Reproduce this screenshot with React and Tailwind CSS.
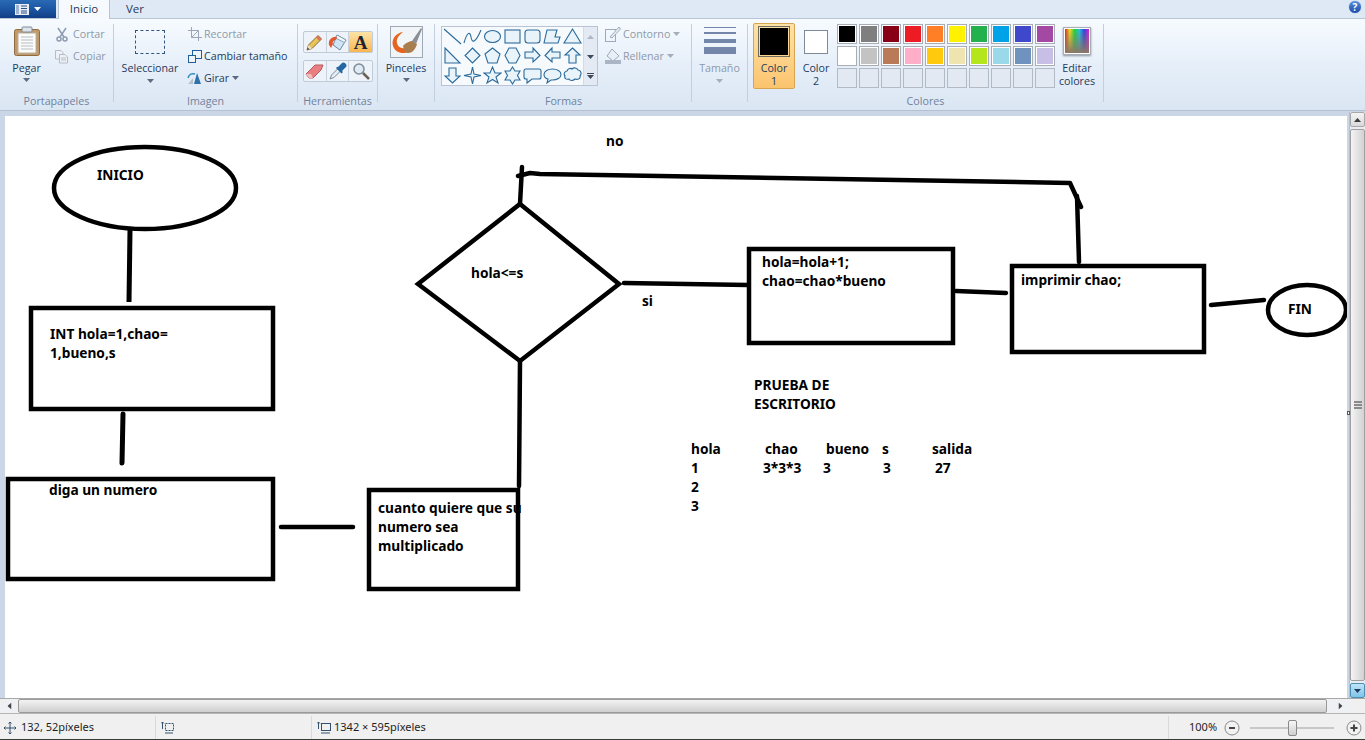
import React from "react";

const sans = "font-['Open_Sans','Noto_Sans',sans-serif]";

function Caret({ className = "", color = "#5d6b80" }) {
  return (
    <svg width="7" height="4" viewBox="0 0 7 4" className={className}>
      <path d="M0 0H7L3.5 4Z" fill={color} />
    </svg>
  );
}

function Divider() {
  return <div className="w-px h-[78px] mt-[5px] bg-[#c3cfdf] shrink-0" />;
}

function GroupLabel({ children }) {
  return <div className="text-center text-[10.7px] leading-[14px] text-[#72829a]">{children}</div>;
}

function Group({ className, label, children }) {
  return (
    <div className={`flex flex-col shrink-0 h-[91px] -mt-px ${className}`}>
      <div className="h-[76px] flex">{children}</div>
      <GroupLabel>{label}</GroupLabel>
    </div>
  );
}

function SmallAction({ icon, label, disabled, caret, className = "" }) {
  return (
    <div className={`flex items-center h-[22px] text-[10.7px] ${disabled ? "text-[#8f99a8]" : "text-[#1f3a5c]"} ${className}`}>
      <span className="w-[17px] h-[17px] flex items-center justify-center mr-[1px] shrink-0">{icon}</span>
      <span className="whitespace-nowrap">{label}</span>
      {caret && <Caret className="ml-[3px]" color={disabled ? "#a5aeba" : "#5d6b80"} />}
    </div>
  );
}

function BigLabel({ children }) {
  return <div className="text-[10.7px] leading-[13px] text-[#1f3a5c] text-center whitespace-nowrap">{children}</div>;
}

const S = "#2a6a9b";
const F = "#e8f3fa";
const shapes = [
  <path d="M1 2L18 17" fill="none" />,
  <path d="M1 16C4 5 7 4 8 10S12 17 18 3" fill="none" />,
  <ellipse cx="9.5" cy="9.5" rx="8" ry="6" />,
  <rect x="2" y="3" width="15" height="13" />,
  <rect x="2" y="3" width="15" height="13" rx="3" />,
  <path d="M1 16L4 3H14L12 10H17L15 16Z" />,
  <path d="M9.5 2L18 16H1Z" />,
  <path d="M2 2L17 17H2Z" />,
  <path d="M9.5 2L17 9.5L9.5 17L2 9.5Z" />,
  <path d="M9.5 2L17 8L14 17H5L2 8Z" />,
  <path d="M6 2H13L17 9.5L13 17H6L2 9.5Z" />,
  <path d="M2 6H10V2L17 9.5L10 16V12H2Z" />,
  <path d="M17 6H9V2L2 9.5L9 16V12H17Z" />,
  <path d="M9.5 2L17 9H13V17H6V9H2Z" />,
  <path d="M6 2H13V10H17L9.5 17L2 10H6Z" />,
  <path d="M9.5 1L11 8L18 9.5L11 11L9.5 18L8 11L1 9.5L8 8Z" />,
  <path d="M9.5 1L12 7H18L13 11L15 17L9.5 13.5L4 17L6 11L1 7H7Z" />,
  <path d="M9.5 1L12 5H17L14.5 9.5L17 14H12L9.5 18L7 14H2L4.5 9.5L2 5H7Z" />,
  <path d="M3 3H16Q18 3 18 5V11Q18 13 16 13H9L4 17V13H3Q1 13 1 11V5Q1 3 3 3Z" />,
  <path d="M9.5 3C14 3 18 5 18 8.500C18 12 14 14 9.500 14H8L4 17L5 13C2.500 12.500 1 11 1 8.500C1 5 5 3 9.500 3Z" />,
  <path d="M4 5C5 2 8 2 9 3C11 1 14 2 15 4C18 4 19 8 17 10C18 13 14 14 12 13C10 15 7 15 6 13C3 14 1 12 2 10C0 8 2 5 4 5Z" />,
];

const row1 = ["#000000", "#7f7f7f", "#880015", "#ed1c24", "#ff7f27", "#fff200", "#22b14c", "#00a2e8", "#3f48cc", "#a349a4"];
const row2 = ["#ffffff", "#c3c3c3", "#b97a57", "#ffaec9", "#ffc90e", "#efe4b0", "#b5e61d", "#99d9ea", "#7092be", "#c8bfe7"];

function Swatch({ c, empty }) {
  return (
    <div className={`w-5 h-5 border ${empty ? "border-[#b2bac6] bg-[#e2e9f3]" : "border-[#a9adb4] p-px bg-white"}`}>
      {!empty && <div className="w-full h-full" style={{ background: c }} />}
    </div>
  );
}

function ToolCell({ children, active }) {
  return (
    <div className={`w-[23px] h-full flex items-center justify-center border-r last:border-r-0 border-[#c8d2df] ${active ? "bg-gradient-to-b from-[#fde3a6] to-[#f8b64e]" : ""}`}>
      {children}
    </div>
  );
}

function Ribbon() {
  return (
    <div className="h-[91px] flex bg-gradient-to-b from-[#f7fbff] via-[#e6eff9] to-[#dbe6f4]">
      {/* Portapapeles */}
      <Group className="w-[113px]" label="Portapapeles">
        <div className="w-[53px] flex flex-col items-center pt-[8px]">
          <svg width="26" height="31" viewBox="0 0 26 31">
            <rect x="0.500" y="3.500" width="25" height="26" rx="2" fill="#c19a6b" stroke="#8f6b40" />
            <rect x="4" y="7" width="18" height="20" fill="#fbfbf8" stroke="#b9b2a3" />
            <path d="M7 11H19M7 14H19M7 17H19M7 20H19M7 23H19" stroke="#b4bdc8" />
            <rect x="8" y="1" width="10" height="5" rx="1" fill="#dfe4ea" stroke="#7f8a98" />
          </svg>
          <div className="mt-[5px]"><BigLabel>Pegar</BigLabel></div>
          <Caret className="mt-[3px]" />
        </div>
        <div className="flex flex-col pt-[5px]">
          <SmallAction
            disabled
            label={<span className="ml-[2px]">Cortar</span>}
            icon={
              <svg width="12" height="15" viewBox="0 0 12 15" fill="none" stroke="#8d9cae" strokeWidth="1.500">
                <path d="M2 1L8 10M10 1L4 10" />
                <circle cx="3" cy="12" r="2" />
                <circle cx="9" cy="12" r="2" />
              </svg>
            }
          />
          <SmallAction
            disabled
            label={<span className="ml-[2px]">Copiar</span>}
            icon={
              <svg width="15" height="15" viewBox="0 0 15 15" fill="#eef2f6" stroke="#b4bcc7">
                <path d="M1.500 1.500H7L9 3.500V10H1.500Z" />
                <path d="M5.500 5.500H11L13.500 8V14H5.500Z" />
                <path d="M7 9H12M7 11H12" />
              </svg>
            }
          />
        </div>
      </Group>
      <Divider />
      {/* Imagen */}
      <Group className="w-[183px]" label="Imagen">
        <div className="w-[72px] flex flex-col items-center pt-[12px]">
          <div className="w-[30px] h-[24px] border border-dashed border-[#34557f]" />
          <div className="mt-[8px]"><BigLabel>Seleccionar</BigLabel></div>
          <Caret className="mt-[4px]" />
        </div>
        <div className="flex flex-col pt-[5px]">
          <SmallAction
            disabled
            label="Recortar"
            icon={
              <svg width="14" height="14" viewBox="0 0 14 14" fill="none" stroke="#9aa6b5">
                <path d="M3.500 0V10.500H14M0 3.500H10.500V14M3.500 10.500L10.500 3.500" />
              </svg>
            }
          />
          <SmallAction
            label="Cambiar tamaño"
            icon={
              <svg width="15" height="14" viewBox="0 0 15 14" fill="#eef4fb" stroke="#1f5f9e">
                <rect x="5.500" y="1.500" width="9" height="8" />
                <rect x="1.500" y="6.500" width="7" height="7" />
              </svg>
            }
          />
          <SmallAction
            caret
            label="Girar"
            icon={
              <svg width="15" height="14" viewBox="0 0 15 14">
                <path d="M7 13L14 13L10 2Z" fill="#2f72a8" />
                <path d="M1 13H6V7Z" fill="#b8c2cf" />
                <path d="M1 7C2 3 5 2 8 3" fill="none" stroke="#2f8fc0" strokeWidth="1.500" />
              </svg>
            }
          />
        </div>
      </Group>
      <Divider />
      {/* Herramientas */}
      <Group className="w-[79px]" label="Herramientas">
        <div className="flex flex-col pl-[5px] pt-[13px] gap-[7px]">
          <div className="flex w-[70px] h-[22px] border border-[#c0cbd9] rounded-[2px] bg-[#eef3fa]">
            <ToolCell>
              <svg width="17" height="17" viewBox="0 0 17 17">
                <path d="M1 16L2.500 11L12 1.500L15.500 5L6 14.500Z" fill="#e8c25a" stroke="#8a6d2a" />
                <path d="M12 1.500L15.500 5L13.500 7L10 3.500Z" fill="#d8745a" />
                <path d="M1 16L2.500 11L6 14.500Z" fill="#efe0c0" />
                <path d="M1 16L1.700 13.500L3.500 15.300Z" fill="#3a3a3a" />
              </svg>
            </ToolCell>
            <ToolCell>
              <svg width="20" height="18" viewBox="0 0 20 18">
                <path d="M9 2L18 7L12 17L5 12Z" fill="#cfe4f4" stroke="#6b8aa5" />
                <path d="M9 2L18 7L16.500 9.500L7.500 5Z" fill="#f2f7fb" stroke="#6b8aa5" strokeWidth="0.700" />
                <path d="M1 12C0 7 4 3 9 4L8 7C6 7 4 9 5 11L3 15Z" fill="#e25a2c" />
              </svg>
            </ToolCell>
            <ToolCell active>
              <span className="font-['Liberation_Serif',serif] font-bold text-[19px] leading-none text-[#1c2430]">A</span>
            </ToolCell>
          </div>
          <div className="flex w-[70px] h-[22px] border border-[#c0cbd9] rounded-[2px] bg-[#eef3fa]">
            <ToolCell>
              <svg width="19" height="15" viewBox="0 0 19 15">
                <path d="M1 10L10 1H18L16 6L8 14H4Z" fill="#ea7f83" stroke="#b55a5e" />
                <path d="M1 10L4 14H8L6 10Z" fill="#f0c0c0" />
              </svg>
            </ToolCell>
            <ToolCell>
              <svg width="18" height="18" viewBox="0 0 18 18">
                <path d="M1 17L2.500 13L10 5.500L12.500 8L5 15.500Z" fill="#e3edf5" stroke="#7d8c9b" />
                <path d="M9 5L13 1C15 -1 19 3 17 5L13 9L14 10L12.500 11.500L7 6L8 5Z" fill="#2467a5" />
              </svg>
            </ToolCell>
            <ToolCell>
              <svg width="18" height="18" viewBox="0 0 18 18" fill="none">
                <circle cx="7" cy="7" r="5" fill="#dfeaf4" stroke="#7e8b99" strokeWidth="1.500" />
                <path d="M11 11L17 17" stroke="#6a6258" strokeWidth="2.500" />
              </svg>
            </ToolCell>
          </div>
        </div>
      </Group>
      <Divider />
      {/* Pinceles */}
      <Group className="w-[56px]" label="">
        <div className="w-full flex flex-col items-center pt-[8px]">
          <svg width="33" height="32" viewBox="0 0 33 32">
            <rect x="0.500" y="0.500" width="32" height="31" fill="#f2f5f8" stroke="#9fa9b5" />
            <path d="M13 6C6 7 1 13 3 20C5 27 14 29 20 25L17 21C12 24 8 21 7 17C6 13 9 9 13 6Z" fill="#e6641f" />
            <path d="M13 20C15 17 20 15 23 15L27 18C26 22 23 27 18 27C15 27 14 24 13 20Z" fill="#a97c50" />
            <path d="M22 15L31 2L32 3L26 18Z" fill="#8a8f96" />
          </svg>
          <div className="mt-[4px]"><BigLabel>Pinceles</BigLabel></div>
          <Caret className="mt-[3px]" />
        </div>
      </Group>
      <Divider />
      {/* Formas */}
      <Group className="w-[256px]" label={<span className="ml-[1px]">Formas</span>}>
        <div className="ml-[6px] mt-[8px] w-[157px] h-[60px] flex border border-[#b8c4d3] bg-[#f4f8fc]">
          <div className="w-[141px] grid grid-cols-7 grid-rows-3 bg-[#f7fafd]">
            {shapes.map((s, i) => (
              <div key={i} className="flex items-center justify-center">
                <svg width="19" height="19" viewBox="0 0 19 19" fill={F} stroke={S} strokeWidth="1.100">{s}</svg>
              </div>
            ))}
          </div>
          <div className="flex-1 flex flex-col items-center border-l border-[#d3dbe6] bg-[#e3eaf4]">
            <div className="h-[20px] flex items-center"><Caret className="rotate-180" color="#b0b8c4" /></div>
            <div className="h-[19px] flex items-center"><Caret color="#3e4a5c" /></div>
            <div className="h-[19px] flex flex-col items-center justify-center gap-[1px]"><div className="w-[7px] h-px bg-[#3e4a5c]" /><Caret color="#3e4a5c" /></div>
          </div>
        </div>
        <div className="ml-[6px] pt-[5px] flex flex-col">
          <SmallAction
            disabled
            caret
            label={<span className="ml-[1px]">Contorno</span>}
            icon={
              <svg width="16" height="16" viewBox="0 0 16 16" fill="none" stroke="#9eaaba">
                <rect x="0.500" y="3.500" width="10" height="12" />
                <path d="M5 11L14 1L15.500 3L7 12Z" fill="#e8eef6" />
              </svg>
            }
          />
          <SmallAction
            disabled
            caret
            label={<span className="ml-[1px]">Rellenar</span>}
            icon={
              <svg width="16" height="16" viewBox="0 0 16 16">
                <path d="M7 1L14 8L8 13L2 8Z" fill="#e8eef6" stroke="#9eaaba" />
                <rect x="0" y="12" width="16" height="4" fill="#aab6c6" />
              </svg>
            }
          />
        </div>
      </Group>
      <Divider />
      {/* Tamaño */}
      <Group className="w-[55px]" label="">
        <div className="w-full flex flex-col items-center pt-[9px]">
          <div className="w-[32px] h-px bg-[#7486aa]" />
          <div className="w-[32px] h-[2px] bg-[#7486aa] mt-[4px]" />
          <div className="w-[32px] h-[4px] bg-[#7486aa] mt-[5px]" />
          <div className="w-[32px] h-[7px] bg-[#7486aa] mt-[4px]" />
          <div className="mt-[8px] text-[10.7px] leading-[13px] text-[#8f99a8]">Tamaño</div>
          <Caret className="mt-[4px]" color="#a5aeba" />
        </div>
      </Group>
      <Divider />
      {/* Colores */}
      <Group className="w-[355px]" label="Colores">
        <div className="ml-[5px] mt-[5px] w-[42px] h-[66px] flex flex-col items-center rounded-[2px] border border-[#d9a44f] bg-gradient-to-b from-[#fee3a8] to-[#fbc46d]">
          <div className="mt-[2px] w-[32px] h-[31px] border border-[#6f6a5f] p-px"><div className="w-full h-full bg-black" /></div>
          <div className="mt-[5px]"><BigLabel>Color</BigLabel></div>
          <BigLabel>1</BigLabel>
        </div>
        <div className="ml-[9px] w-[24px] flex flex-col items-center pt-[12px]">
          <div className="w-[24px] h-[24px] border border-[#7f8a98] bg-white shrink-0" />
          <div className="mt-[8px]"><BigLabel>Color</BigLabel></div>
          <BigLabel>2</BigLabel>
        </div>
        <div className="ml-[9px] mt-[6px] flex flex-col gap-[2px]">
          <div className="flex gap-[2px]">{row1.map((c) => <Swatch key={c} c={c} />)}</div>
          <div className="flex gap-[2px]">{row2.map((c) => <Swatch key={c} c={c} />)}</div>
          <div className="flex gap-[2px]">{row1.map((c) => <Swatch key={c} empty />)}</div>
        </div>
        <div className="w-[44px] flex flex-col items-center pt-[9px]">
          <div className="w-[28px] h-[28px] border border-[#a9adb4] p-px bg-white shadow-[0_1px_2px_#8a94a3] shrink-0">
            <div className="w-full h-full bg-[linear-gradient(180deg,transparent,#8a7768),linear-gradient(90deg,#e02020,#f0e020,#20d040,#20c0e0,#3040e0,#e020d0)]" />
          </div>
          <div className="mt-[7px]"><BigLabel>Editar</BigLabel></div>
          <BigLabel>colores</BigLabel>
        </div>
      </Group>
      <Divider />
    </div>
  );
}

function Title() {
  return (
    <div className="h-[19px] flex bg-[#dfe9f5] border-b border-[#b8c5d6] text-[11.5px] leading-[18px] text-[#1f3a5c]">
      <div className="w-[56px] h-[18px] bg-gradient-to-b from-[#2a6ab5] via-[#1c56a3] to-[#123e84] flex items-center justify-center gap-[5px]">
        <svg width="14" height="11" viewBox="0 0 14 11">
          <rect width="14" height="11" fill="#e9eef6" />
          <path d="M6 2H12M6 4.500H12M6 7H12M6 9H12" stroke="#2a4f86" />
          <rect x="1" y="1" width="3" height="9" fill="#9fb4d2" />
        </svg>
        <Caret color="#ffffff" />
      </div>
      <div className="ml-[2px] w-[52px] h-[19px] bg-[#f6f9fd] border-x border-[#b8c5d6] text-center z-10">Inicio</div>
      <div className="w-[50px] text-center">Ver</div>
      <div className="ml-auto mr-[3px] w-[14px] h-[14px] rounded-full bg-gradient-to-b from-[#5b8fdc] to-[#1c48a8] border border-[#cfe0f5] text-white text-[10px] font-bold leading-[12px] text-center">?</div>
    </div>
  );
}

function Txt({ className, children }) {
  return <div className={`absolute whitespace-nowrap font-bold text-[13.7px] leading-[19px] text-black ${className}`}>{children}</div>;
}

function Canvas() {
  return (
    <div className="w-[1342px] h-[582px] bg-white relative overflow-hidden font-['Noto_Sans',sans-serif]">
      <svg className="absolute inset-0" width="1342" height="582" viewBox="5 116 1342 582" fill="none" stroke="#000" strokeWidth="4.500" strokeLinecap="round">
        <ellipse cx="145" cy="188" rx="91" ry="41" />
        <path d="M130 230L129 302" strokeWidth="5" strokeLinecap="butt" />
        <rect x="31" y="308" width="242" height="101" />
        <path d="M123 414L122 463" strokeWidth="5" />
        <rect x="8" y="479" width="265" height="100" />
        <path d="M281 527H353" />
        <rect x="369" y="490" width="149" height="99" />
        <path d="M520 361L519 486" />
        <path d="M520 204L619 284L520 361L418 284Z" strokeLinejoin="miter" />
        <path d="M624 283L748 285" />
        <rect x="749" y="249" width="204" height="94" />
        <path d="M956 291L1006 293" />
        <rect x="1012" y="266" width="192" height="86" />
        <path d="M1211 305L1264 300" />
        <ellipse cx="1307" cy="310" rx="39" ry="25" />
        <path d="M1079 262L1077 196" />
        <path d="M1081 207L1070 183L540 174L530 173L518 176" strokeLinejoin="round" />
        <path d="M522 167L520 204" />
      </svg>
      <Txt className="left-[601px] top-[15px]">no</Txt>
      <Txt className="left-[92px] top-[49px]">INICIO</Txt>
      <Txt className="left-[466px] top-[147px]">hola&lt;=s</Txt>
      <Txt className="left-[637px] top-[175px]">si</Txt>
      <Txt className="left-[757px] top-[136px]">hola=hola+1;<br />chao=chao*bueno</Txt>
      <Txt className="left-[1016px] top-[154px]">imprimir chao;</Txt>
      <Txt className="left-[1283px] top-[183px]">FIN</Txt>
      <Txt className="left-[45px] top-[208px]">INT hola=1,chao=<br />1,bueno,s</Txt>
      <Txt className="left-[44px] top-[364px]">diga un numero</Txt>
      <Txt className="left-[373px] top-[382px]">cuanto quiere que su<br />numero sea<br />multiplicado</Txt>
      <Txt className="left-[749px] top-[259px]">PRUEBA DE<br />ESCRITORIO</Txt>
      <Txt className="left-[686px] top-[323px]">hola</Txt>
      <Txt className="left-[760px] top-[323px]">chao</Txt>
      <Txt className="left-[821px] top-[323px]">bueno</Txt>
      <Txt className="left-[877px] top-[323px]">s</Txt>
      <Txt className="left-[927px] top-[323px]">salida</Txt>
      <Txt className="left-[686px] top-[342px]">1<br />2<br />3</Txt>
      <Txt className="left-[758px] top-[342px]">3*3*3</Txt>
      <Txt className="left-[818px] top-[342px]">3</Txt>
      <Txt className="left-[878px] top-[342px]">3</Txt>
      <Txt className="left-[930px] top-[342px]">27</Txt>
    </div>
  );
}

function VScroll() {
  return (
    <div className="w-[16px] -mt-[4px] h-[586px] flex flex-col items-center bg-[#e9edf3] border-l border-[#b6bfcc]">
      <div className="w-[15px] h-[15px] flex items-center justify-center bg-gradient-to-b from-[#f4f4f4] to-[#d9d9d9] border border-[#a8a8a8] rounded-[2px] shrink-0"><Caret className="rotate-180" color="#3a3a3a" /></div>
      <div className="w-[15px] flex-1 my-[2px] flex items-center justify-center bg-gradient-to-r from-[#f4f4f4] to-[#d2d2d2] border border-[#a0a0a0] rounded-[2px]">
        <div className="flex flex-col gap-px"><div className="w-[8px] h-[2px] bg-[#8a8a8a]" /><div className="w-[8px] h-[2px] bg-[#8a8a8a]" /><div className="w-[8px] h-[2px] bg-[#8a8a8a]" /></div>
      </div>
      <div className="w-[15px] h-[15px] flex items-center justify-center bg-gradient-to-b from-[#bfe4f7] to-[#7ec4e8] border border-[#4d8eb3] rounded-[2px] shrink-0"><Caret color="#1f3a5c" /></div>
    </div>
  );
}

function HScroll() {
  return (
    <div className="h-[16px] flex bg-[#eef0f3] border-t border-[#a8a8a8] border-b border-b-[#b5b5b5]">
      <div className="w-[18px] flex items-center justify-center"><Caret className="rotate-90" color="#444" /></div>
      <div className="w-[1309px] rounded-[2px] border border-[#9a9a9a] bg-gradient-to-b from-[#f3f3f3] to-[#cfcfcf]" />
      <div className="w-[26px] flex items-center justify-center"><Caret className="-rotate-90" color="#444" /></div>
      <div className="flex-1 bg-[#f0f0f0]" />
    </div>
  );
}

function Status() {
  return (
    <div className="h-[26px] flex items-center bg-[#f0f0f0] border-b border-[#3b3b3b] pt-[2px] text-[11px] text-[#1f1f1f] font-['Noto_Sans',sans-serif]">
      <div className="w-[156px] h-full flex items-center pl-[3px] border-r border-[#d9d9d9]">
        <svg width="14" height="14" viewBox="0 0 14 14" fill="none" stroke="#33506f"><path d="M7 1V13M1 7H13M5.500 2.500L7 1L8.500 2.500M5.500 11.500L7 13L8.500 11.500M2.500 5.500L1 7L2.500 8.500M11.500 5.500L13 7L11.500 8.500" /></svg>
        <span className="ml-[4px]">132, 52píxeles</span>
      </div>
      <div className="w-[156px] h-full flex items-center pl-[5px] border-r border-[#d9d9d9]">
        <svg width="14" height="14" viewBox="0 0 14 14" fill="none" stroke="#33506f"><rect x="4.500" y="2.500" width="8" height="7" strokeDasharray="2 1" /><path d="M1.500 1V8M0 2.500L1.500 1L3 2.500M4 12H12" /></svg>
      </div>
      <div className="flex items-center pl-[5px] flex-1 h-full">
        <svg width="15" height="14" viewBox="0 0 15 14" fill="none" stroke="#33506f"><rect x="4.500" y="2.500" width="9" height="7" /><path d="M1.500 1V8M0 2.500L1.500 1L3 2.500M4 12H13" /></svg>
        <span className="ml-[2px]">1342 × 595píxeles</span>
      </div>
      <div className="w-[197px] h-full flex items-center border-l border-[#d9d9d9]">
        <span className="ml-[20px]">100%</span>
        <svg className="ml-[7px]" width="16" height="16" viewBox="0 0 16 16" fill="#f2f2f2" stroke="#8a8a8a"><circle cx="8" cy="8" r="7" /><path d="M5 8H11" stroke="#444" strokeWidth="2" /></svg>
        <div className="relative ml-[10px] w-[84px] h-[2px] bg-[#c8c8c8]">
          <div className="absolute left-[38px] top-[-7px] w-[9px] h-[16px] rounded-[2px] border border-[#8a8a8a] bg-gradient-to-b from-[#f7f7f7] to-[#cfcfcf]" />
        </div>
        <svg className="ml-[12px]" width="16" height="16" viewBox="0 0 16 16" fill="#f2f2f2" stroke="#8a8a8a"><circle cx="8" cy="8" r="7" /><path d="M4.500 8H11.500M8 4.500V11.500" stroke="#444" strokeWidth="2" /></svg>
      </div>
    </div>
  );
}

export default function App() {
  return (
    <div className={`w-[1365px] h-[740px] overflow-hidden flex flex-col bg-[#cbd6e6] ${sans}`}>
      <Title />
      <Ribbon />
      <div className="h-[6px] bg-[#cad5e5] border-t border-[#b5c1d1]" />
      <div className="h-[582px] flex pl-[5px]">
        <Canvas />
        <div className="w-[2px] relative">
          <div className="absolute left-0 top-[295px] w-[3px] h-[4px] border border-[#555] bg-white" />
        </div>
        <VScroll />
      </div>
      <HScroll />
      <Status />
    </div>
  );
}
